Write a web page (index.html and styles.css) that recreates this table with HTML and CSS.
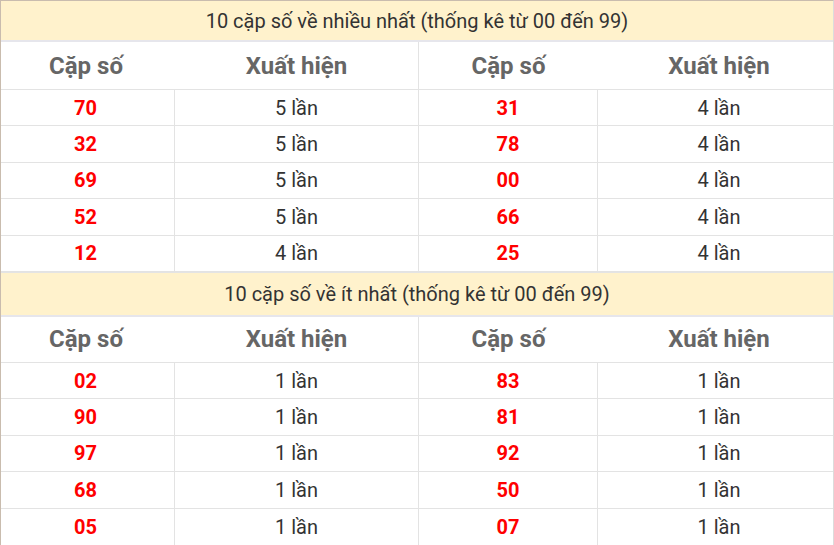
FILE: index.html
```html
<!DOCTYPE html>
<html lang="vi">
<head>
<meta charset="utf-8">
<link rel="stylesheet" href="styles.css">
</head>
<body>
<div class="board">
  <section class="block first">
    <div class="title">10 cặp số về nhiều nhất (thống kê từ 00 đến 99)</div>
    <div class="grid">
      <div class="head c1">Cặp số</div><div class="head">Xuất hiện</div><div class="head mid">Cặp số</div><div class="head c4">Xuất hiện</div>
      <div class="num c1">70</div><div class="cnt">5 lần</div><div class="num mid">31</div><div class="cnt c4">4 lần</div>
      <div class="num c1">32</div><div class="cnt">5 lần</div><div class="num mid">78</div><div class="cnt c4">4 lần</div>
      <div class="num c1">69</div><div class="cnt">5 lần</div><div class="num mid">00</div><div class="cnt c4">4 lần</div>
      <div class="num c1">52</div><div class="cnt">5 lần</div><div class="num mid">66</div><div class="cnt c4">4 lần</div>
      <div class="num c1">12</div><div class="cnt">4 lần</div><div class="num mid">25</div><div class="cnt c4">4 lần</div>
    </div>
  </section>
  <section class="block second">
    <div class="title">10 cặp số về ít nhất (thống kê từ 00 đến 99)</div>
    <div class="grid">
      <div class="head c1">Cặp số</div><div class="head">Xuất hiện</div><div class="head mid">Cặp số</div><div class="head c4">Xuất hiện</div>
      <div class="num c1">02</div><div class="cnt">1 lần</div><div class="num mid">83</div><div class="cnt c4">1 lần</div>
      <div class="num c1">90</div><div class="cnt">1 lần</div><div class="num mid">81</div><div class="cnt c4">1 lần</div>
      <div class="num c1">97</div><div class="cnt">1 lần</div><div class="num mid">92</div><div class="cnt c4">1 lần</div>
      <div class="num c1">68</div><div class="cnt">1 lần</div><div class="num mid">50</div><div class="cnt c4">1 lần</div>
      <div class="num c1">05</div><div class="cnt">1 lần</div><div class="num mid">07</div><div class="cnt c4">1 lần</div>
    </div>
  </section>
</div>
</body>
</html>
```
FILE: styles.css
```css
* { box-sizing: border-box; }
html, body { margin: 0; padding: 0; background: #fff; }
body {
  font-family: Roboto, "Liberation Sans", Arial, sans-serif;
  color: #333;
  width: 834px;
  height: 545px;
  overflow: hidden;
}
.board {
  border-top: 1px solid #c9bcae;
  border-left: 1px solid #c9bcae;
  border-right: 1px solid #dcdcdc;
  width: 834px;
}
.title {
  background: #fff2cc;
  text-align: center;
  font-size: 20px;
  color: #333;
  display: flex;
  align-items: center;
  justify-content: center;
  border-bottom: 2px solid #e6e6ec;
}
.first .title { height: 41px; }
.second .title { height: 45px; border-top: 1px solid #e4e4e4; }
.grid {
  display: grid;
  grid-template-columns: 174px 243px 180px 1fr;
}
.grid > div {
  display: flex;
  align-items: center;
  justify-content: center;
  border-bottom: 1px solid #e3e3e3;
}
.head {
  font-size: 24px;
  font-weight: bold;
  color: #666;
  height: 48px;
}
.second .head { height: 46px; }
.num, .cnt { height: 36.4px; }
.c1 { padding-right: 4px; }
.c4 { padding-left: 7px; }
.num {
  color: #ff0000;
  font-weight: bold;
  font-size: 20px;
  border-right: 1px solid #e3e3e3;
}
.cnt { font-size: 20px; color: #333; }
.mid { border-left: 1px solid #e3e3e3; }
.second .grid > div:nth-last-child(-n+4) { border-bottom: none; }
```
